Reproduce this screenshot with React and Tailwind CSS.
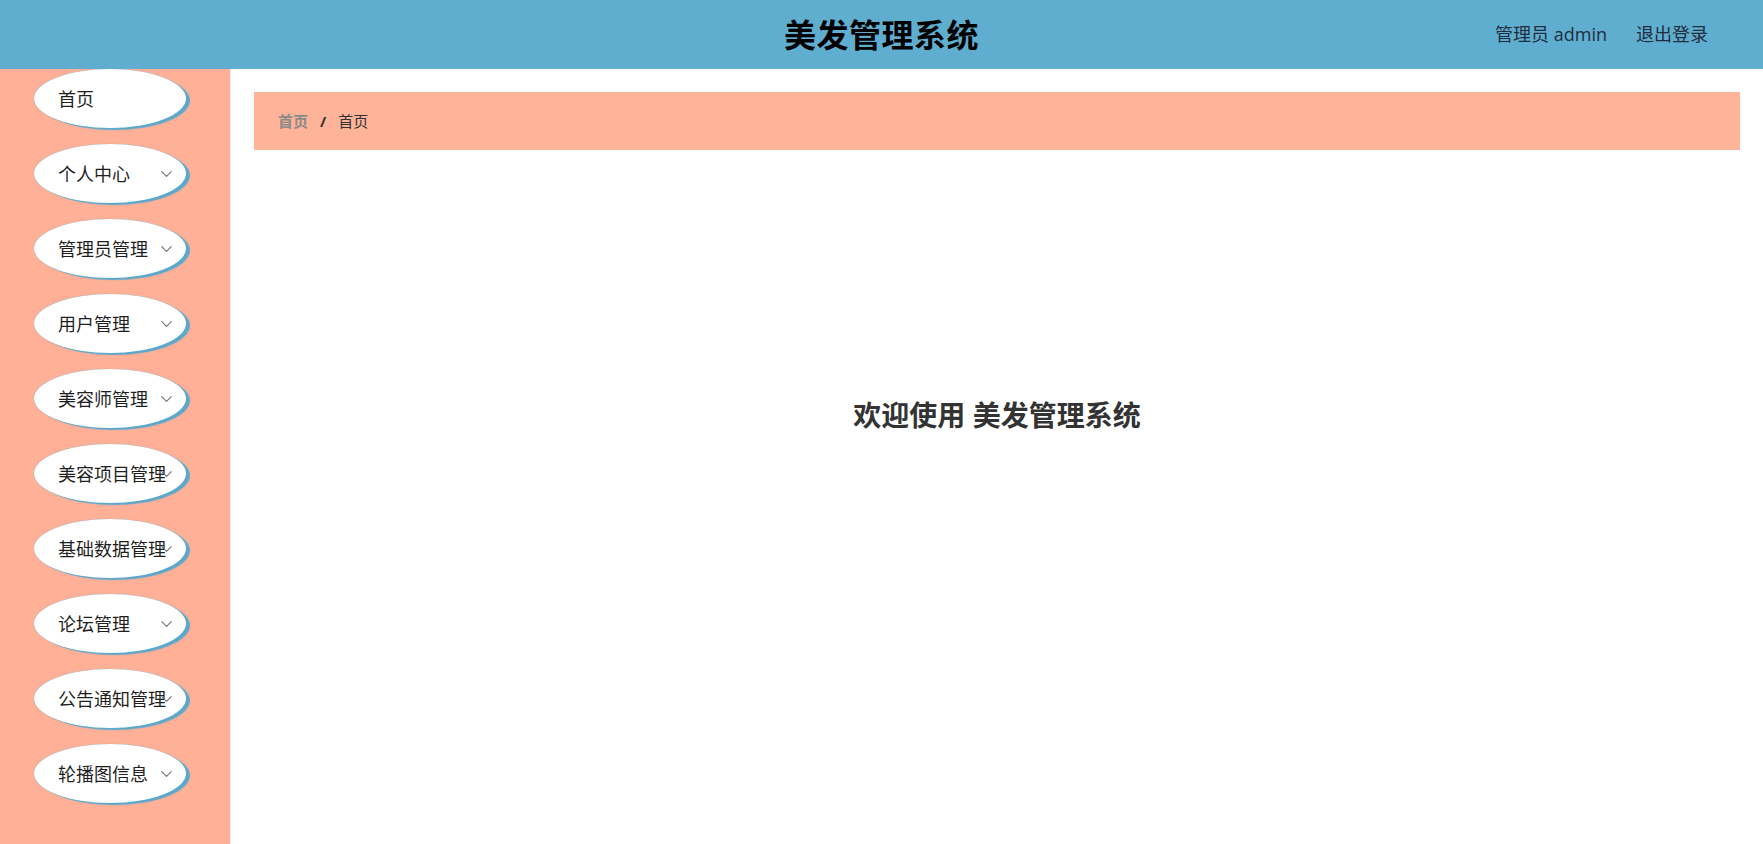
import React from "react";
import { ChevronDown } from "lucide-react";

// Side menu entries; only the first one has no submenu
const menus = [
  { title: "首页", sub: false },
  { title: "个人中心", sub: true },
  { title: "管理员管理", sub: true },
  { title: "用户管理", sub: true },
  { title: "美容师管理", sub: true },
  { title: "美容项目管理", sub: true },
  { title: "基础数据管理", sub: true },
  { title: "论坛管理", sub: true },
  { title: "公告通知管理", sub: true },
  { title: "轮播图信息", sub: true },
];

const font = "font-['Open_Sans','Noto_Sans_CJK_SC',sans-serif]";

const MenuItem = ({ title, sub }) => (
  <div className="relative flex items-center w-[152px] h-[59px] mb-[16px] ml-[34px] rounded-[50%] bg-white shadow-[4px_2px_1px_#5ba8cc,0_0_1px_#5ba8cc] cursor-pointer">
    <span className="pl-[24px] text-[18px] text-[#1f1f1f] whitespace-nowrap leading-none">
      {title}
    </span>
    {sub && (
      <ChevronDown
        size={19}
        strokeWidth={1.3}
        className="absolute right-[10px] top-1/2 -translate-y-1/2 text-[#6b6e73]"
      />
    )}
  </div>
);

const App = () => {
  return (
    <div className={`${font} min-h-screen flex flex-col bg-white`}>
      {/* Top bar */}
      <header className="relative h-[69px] flex items-center justify-center bg-[#5faed0]">
        <h1 className="text-[32px] font-bold text-black tracking-[0.5px]">美发管理系统</h1>
        <div className="absolute right-[55px] top-0 h-full flex items-center gap-[29px] text-[18px] text-[#1f2d3d]">
          <span>管理员 admin</span>
          <span className="cursor-pointer">退出登录</span>
        </div>
      </header>

      <div className="flex flex-1">
        {/* Side menu */}
        <aside className="w-[231px] h-[775px] bg-[#ffb096] border-r border-[#f3ece8] flex flex-col">
          {menus.map((m) => (
            <MenuItem key={m.title} title={m.title} sub={m.sub} />
          ))}
        </aside>

        {/* Main area */}
        <main className="flex-1 flex flex-col pt-[23px] pl-[23px] pr-[23px]">
          <div className="h-[58px] flex items-center px-[24px] bg-[#ffb398] text-[15px]">
            <span className="font-bold text-[#8a8a8a]">首页</span>
            <span className="mx-[12px] text-[#303133] font-bold">/</span>
            <span className="text-[#303133]">首页</span>
          </div>
          <div className="flex justify-center pt-[244px]">
            <h2 className="text-[28px] font-bold text-[#333333]">欢迎使用 美发管理系统</h2>
          </div>
        </main>
      </div>
    </div>
  );
};

export default App;
